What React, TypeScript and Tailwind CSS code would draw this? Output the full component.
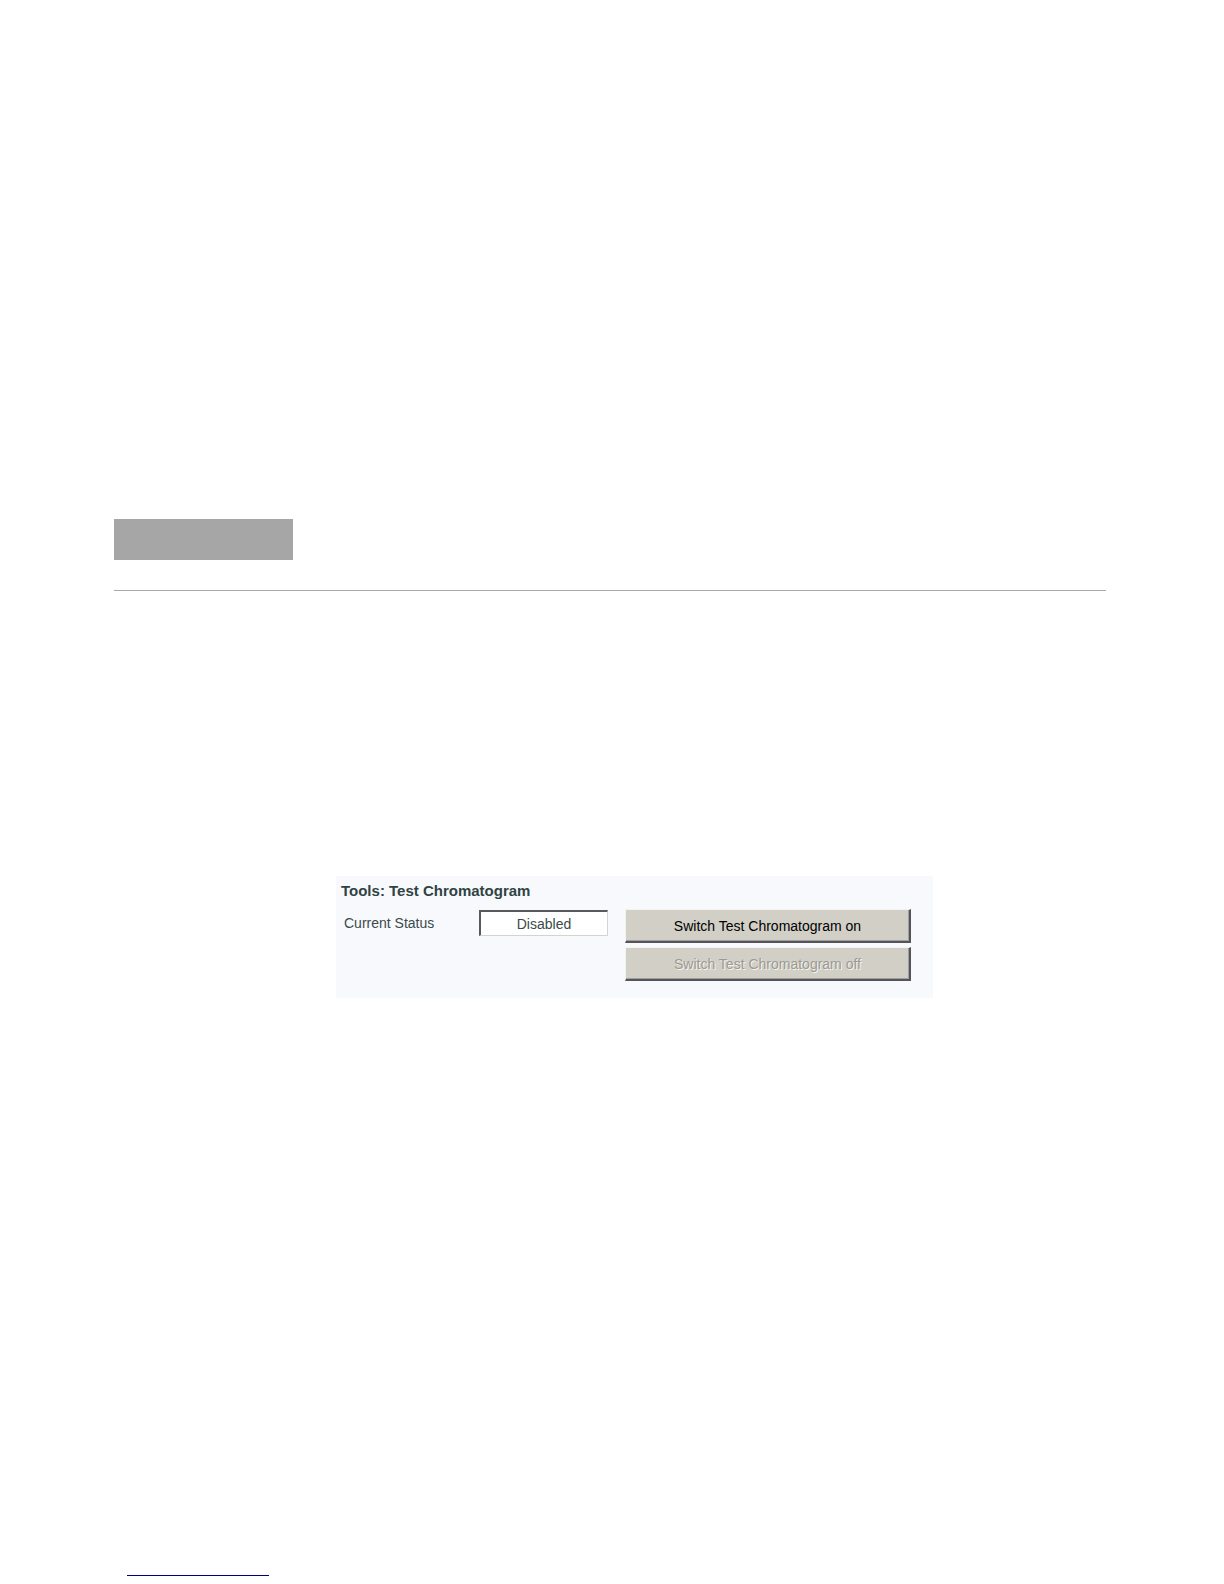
const buttonBase =
  "h-[34px] w-full border-t border-l border-r-2 border-b-2 border-t-[#f3f3f3] border-l-[#f3f3f3] border-r-[#55545a] border-b-[#55545a] bg-[#d1cfc6] pt-px text-center text-sm leading-5 shadow-[inset_-1px_-1px_0_#a09f9d]";

export default function App() {
  return (
    <div className="flex min-h-screen flex-col bg-white pt-[519px] pr-[118px] pb-2 pl-[114px] font-['Liberation_Sans',Arial,sans-serif]">
      <header className="border-b border-[#a9a9a9] pb-[30px]">
        <div className="h-[41px] w-[179px] bg-[#a6a6a6]" />
      </header>

      <main className="mt-[285px] ml-[222px]">
        <section
          aria-labelledby="tools-title"
          className="w-full max-w-[597px] bg-[#f8f9fd] pt-[5px] pr-[22px] pb-[17px] pl-[5px] text-[#3b4a4b]"
        >
          <h1 id="tools-title" className="text-[15px] leading-5 font-bold text-[#2f4343]">
            Tools: Test Chromatogram
          </h1>
          <div className="mt-2 flex items-start">
            <label htmlFor="status" className="w-[138px] shrink-0 pt-1 pl-[3px] text-sm leading-5">
              Current Status
            </label>
            <input
              id="status"
              readOnly
              value="Disabled"
              className="mt-px h-[26px] w-[129px] shrink-0 border-t-2 border-r border-b border-l-2 border-t-[#59585d] border-r-[#d5d3ce] border-b-[#d5d3ce] border-l-[#59585d] bg-white text-center text-sm leading-5 outline-none"
            />
            <div className="ml-[17px] flex min-w-0 flex-1 flex-col gap-1">
              <button type="button" className={`${buttonBase} text-black`}>
                Switch Test Chromatogram on
              </button>
              <button
                type="button"
                disabled
                className={`${buttonBase} text-[#9c9a94] [text-shadow:1px_1px_0_#f4f3ee]`}
              >
                Switch Test Chromatogram off
              </button>
            </div>
          </div>
        </section>
      </main>

      <footer className="mt-auto pl-[13px]">
        <a href="#top" aria-label="Back to top" className="block h-5 w-[142px] border-b border-[#000084]" />
      </footer>
    </div>
  );
}
